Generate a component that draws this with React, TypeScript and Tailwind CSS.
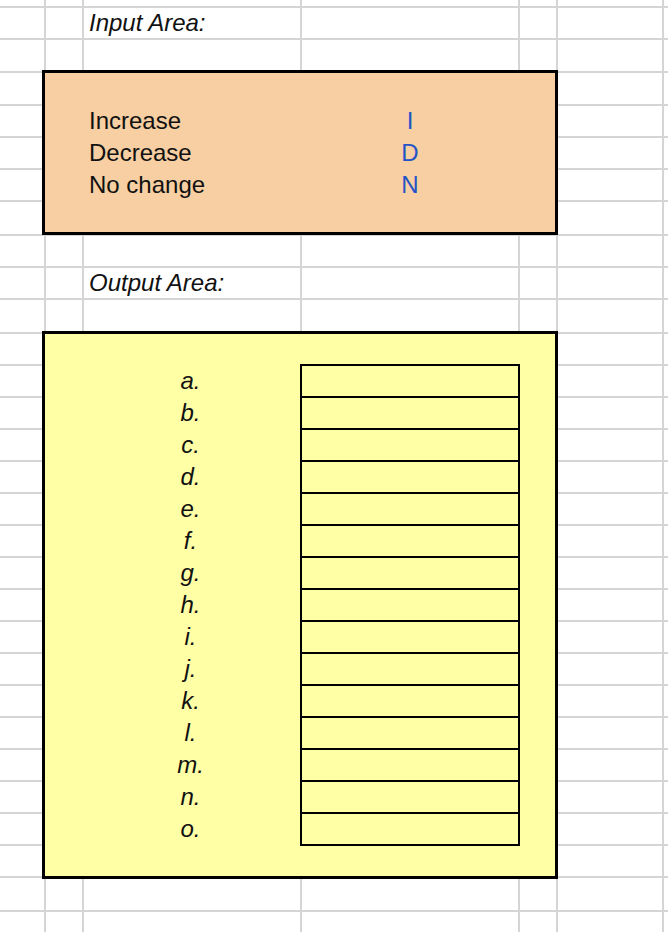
import React from "react";

const cols = "grid-cols-[44px_36px_216px_216px_36px_104px_1fr]";
const letters = ["a.", "b.", "c.", "d.", "e.", "f.", "g.", "h.", "i.", "j.", "k.", "l.", "m.", "n.", "o."];
const letterRows = [
  "row-start-13",
  "row-start-14",
  "row-start-15",
  "row-start-16",
  "row-start-17",
  "row-start-18",
  "row-start-19",
  "row-start-20",
  "row-start-21",
  "row-start-22",
  "row-start-23",
  "row-start-24",
  "row-start-25",
  "row-start-26",
  "row-start-27",
];

export default function App() {
  const cells = Array.from({ length: 30 * 7 });
  return (
    <div
      className="grid h-[932px] w-[668px] overflow-hidden bg-white text-[24px] leading-none text-[#111]"
      style={{ fontFamily: '"Liberation Sans", Arial, sans-serif' }}
    >
      {/* background spreadsheet grid */}
      <div
        className={`col-start-1 row-start-1 grid ${cols} grid-rows-[6px_30px_31px_31px_30px_30px_30px_32px_30px_30px_32px_repeat(17,30px)_32px_20px] gap-[2px] bg-[#d5d5d5]`}
      >
        {cells.map((_, i) => (
          <div key={i} className="bg-white" />
        ))}
      </div>

      {/* content overlay */}
      <div
        className={`col-start-1 row-start-1 grid ${cols} grid-rows-[6px_30px_31px_31px_30px_30px_30px_32px_30px_30px_32px_repeat(17,30px)_32px_20px] gap-[2px]`}
      >
        <div className="col-start-3 row-start-2 flex items-center pl-[5px] italic">Input Area:</div>

        <div className="col-start-2 col-end-6 row-start-4 row-end-9 -mb-[1px] -ml-[4px] -mr-[2px] -mt-[3px] border-[3px] border-black bg-[#f7cfa2]" />
        <div className="col-start-3 row-start-5 flex items-center pl-[5px]">Increase</div>
        <div className="col-start-3 row-start-6 flex items-center pl-[5px]">Decrease</div>
        <div className="col-start-3 row-start-7 flex items-center pl-[5px]">No change</div>
        <div className="col-start-4 row-start-5 flex items-center justify-center text-[#2453c7]">I</div>
        <div className="col-start-4 row-start-6 flex items-center justify-center text-[#2453c7]">D</div>
        <div className="col-start-4 row-start-7 flex items-center justify-center text-[#2453c7]">N</div>

        <div className="col-start-3 row-start-10 flex items-center pl-[5px] italic">Output Area:</div>

        <div className="col-start-2 col-end-6 row-start-12 row-end-29 -mb-[3px] -ml-[4px] -mr-[2px] -mt-[3px] border-[3px] border-black bg-[#ffffa6]" />
        <div className="col-start-4 row-start-13 row-end-28 -m-[2px] flex flex-col divide-y-2 divide-black border-2 border-black">
          {letters.map((l) => (
            <div key={l} className="box-content h-[30px] shrink-0" />
          ))}
        </div>
        {letters.map((l, i) => (
          <div key={l} className={`col-start-3 ${letterRows[i]} flex items-center justify-center pr-[3px] italic`}>
            {l}
          </div>
        ))}
      </div>
    </div>
  );
}
